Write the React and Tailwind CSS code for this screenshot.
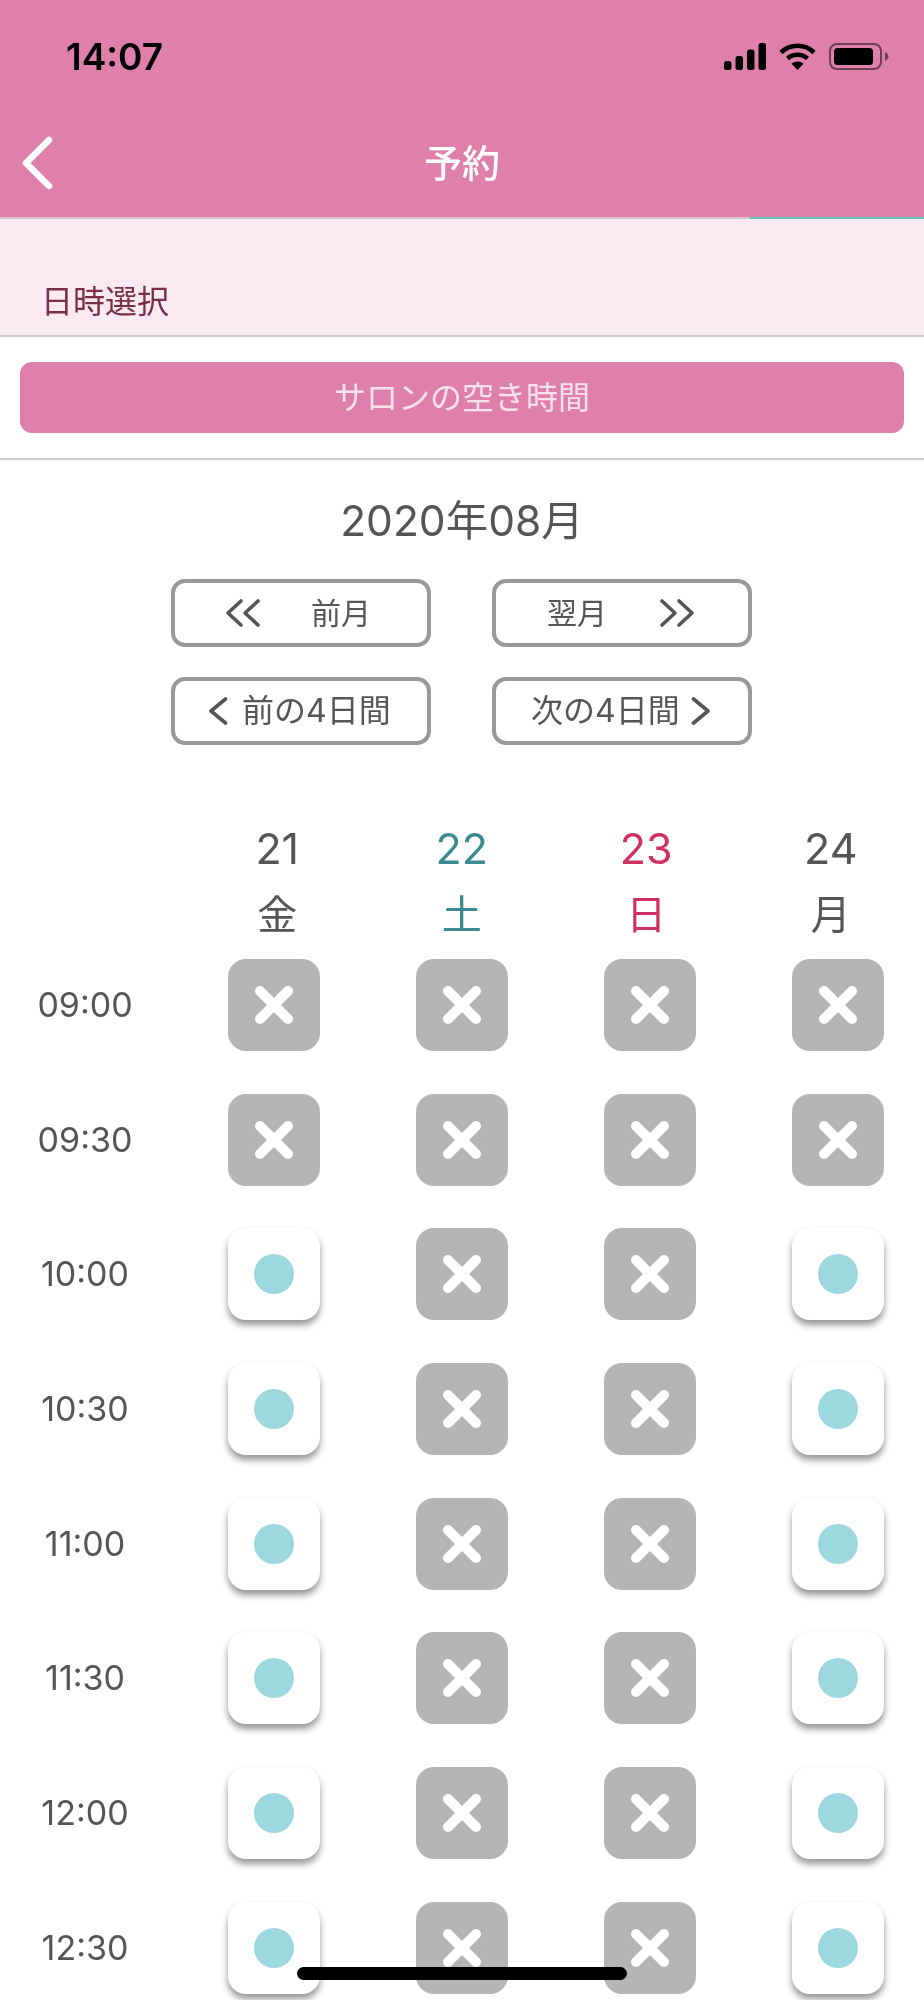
const FONT = "font-['Inter','Noto_Sans_CJK_JP',sans-serif]";

const rows = [
  ["09:00", 0, 0, 0, 0],
  ["09:30", 0, 0, 0, 0],
  ["10:00", 1, 0, 0, 1],
  ["10:30", 1, 0, 0, 1],
  ["11:00", 1, 0, 0, 1],
  ["11:30", 1, 0, 0, 1],
  ["12:00", 1, 0, 0, 1],
  ["12:30", 1, 0, 0, 1],
];

const days = [
  { d: "21", w: "金", c: "text-[#555555]" },
  { d: "22", w: "土", c: "text-[#3b8a8f]" },
  { d: "23", w: "日", c: "text-[#d0305f]" },
  { d: "24", w: "月", c: "text-[#555555]" },
];

function Chev({ dir = "left", double = false, className = "" }) {
  const w = double ? 36 : 20;
  return (
    <svg width={w} height="30" viewBox={`0 0 ${w} 30`} fill="none" stroke="#555555" strokeWidth="3.6" strokeLinecap="round" strokeLinejoin="round" className={`shrink-0 ${className}`}>
      {dir === "left" ? (
        double ? (
          <>
            <path d="M16 3 L3 15 L16 27" />
            <path d="M33 3 L20 15 L33 27" />
          </>
        ) : (
          <path d="M17.5 3 L3 15 L17.5 27" />
        )
      ) : double ? (
        <>
          <path d="M3 3 L16 15 L3 27" />
          <path d="M20 3 L33 15 L20 27" />
        </>
      ) : (
        <path d="M2.5 3 L17 15 L2.5 27" />
      )}
    </svg>
  );
}

function NavBtn({ children, className = "" }) {
  return (
    <div className={`w-[260px] h-[68px] border-[4px] border-[#999999] rounded-[14px] flex items-center text-[30px] text-[#555555] leading-none whitespace-nowrap ${className}`}>
      {children}
    </div>
  );
}

function Cell({ open }) {
  if (open) {
    return (
      <div className="w-[92px] h-[92px] rounded-[18px] bg-white flex items-center justify-center shadow-[0_5px_7px_rgba(0,0,0,0.42)]">
        <div className="w-[40px] h-[40px] rounded-full bg-[#9dd8df]" />
      </div>
    );
  }
  return (
    <div className="w-[92px] h-[92px] rounded-[18px] bg-[#b5b5b5] flex items-center justify-center">
      <svg width="38" height="38" viewBox="0 0 38 38" stroke="#ffffff" strokeWidth="10" strokeLinecap="round">
        <path d="M5 5 L33 33 M33 5 L5 33" />
      </svg>
    </div>
  );
}

export default function App() {
  return (
    <div className={`relative h-[2000px] w-[924px] overflow-hidden bg-white blur-[0.5px] ${FONT}`}>
      <header className="bg-[#df80ab] h-[217px] flex flex-col">
        <div className="h-[112px] flex items-center justify-between pl-[66px] pr-[35px]">
          <span className="text-[37px] font-semibold text-black leading-none">14:07</span>
          <div className="flex items-center gap-[13px]">
            <svg width="42" height="27" viewBox="0 0 42 27" fill="#000000">
              <rect x="0" y="18" width="7.5" height="9" rx="2.5" />
              <rect x="11.5" y="13" width="7.5" height="14" rx="2.5" />
              <rect x="23" y="6.5" width="7.5" height="20.5" rx="2.5" />
              <rect x="34.5" y="0" width="7.5" height="27" rx="2.5" />
            </svg>
            <svg width="37" height="27" viewBox="0 0 37 27" fill="none" stroke="#000000" strokeWidth="4.6">
              <path d="M2 9.5 C11 0.5 26 0.5 35 9.5" />
              <path d="M8.5 15.5 C14 10.5 23 10.5 28.5 15.5" />
              <path d="M18.5 27 L12.5 20.8 C16 17.8 21 17.8 24.5 20.8 Z" fill="#000000" stroke="none" />
            </svg>
            <svg width="60" height="27" viewBox="0 0 60 27" fill="none">
              <rect x="1" y="1" width="51" height="25" rx="7" stroke="#000000" strokeOpacity="0.5" strokeWidth="2" />
              <rect x="5" y="5" width="39" height="17" rx="3.5" fill="#000000" />
              <path d="M56 9 C58.5 10 59.5 12 59.5 13.5 C59.5 15 58.5 17 56 18 Z" fill="#000000" fillOpacity="0.5" />
            </svg>
          </div>
        </div>
        <div className="relative h-[102px] flex items-center justify-center">
          <svg className="absolute left-[20px] top-[24px]" width="34" height="54" viewBox="0 0 34 54" fill="none" stroke="#ffffff" strokeWidth="6.5" strokeLinecap="round" strokeLinejoin="round">
            <path d="M29 4 L6 27 L29 50" />
          </svg>
          <span className="text-[38px] font-medium text-white leading-none">予約</span>
        </div>
      </header>
      <div className="flex justify-end h-[2px] bg-[#d9c4cf]">
        <div className="w-[174px] bg-[#5fc4b8]" />
      </div>

      <div className="h-[118px] bg-[#f8eaf0] border-b-2 border-[#cccccc] flex items-end pl-[41px] pb-[17px]">
        <span className="text-[32px] text-[#7a2e45] leading-none">日時選択</span>
      </div>

      <div className="px-[20px] pt-[25px] pb-[25px] border-b-2 border-[#cccccc]">
        <div className="h-[71px] rounded-[12px] bg-[#df7fab] flex items-center justify-center text-[32px] text-[#f8e3ec] leading-none">
          サロンの空き時間
        </div>
      </div>

      <div className="mt-[36px] text-center text-[42.5px] text-[#555555] leading-[50px]">2020年08月</div>

      <div className="mt-[33px] pl-[171px] grid grid-cols-[260px_260px] gap-x-[61px] gap-y-[30px] w-fit">
        <NavBtn className="pl-[50px]">
          <Chev dir="left" double />
          <span className="ml-[50px]">前月</span>
        </NavBtn>
        <NavBtn className="pl-[51px]">
          <span>翌月</span>
          <Chev dir="right" double className="ml-[52px]" />
        </NavBtn>
        <NavBtn className="pl-[33px]">
          <Chev dir="left" />
          <span className="ml-[14px] text-[32px]">前の4日間</span>
        </NavBtn>
        <NavBtn className="pl-[35px]">
          <span className="text-[32px]">次の4日間</span>
          <Chev dir="right" className="ml-[11px]" />
        </NavBtn>
      </div>

      <div className="mt-[78px] pl-[185px] grid grid-cols-[184.5px_184.5px_184.5px_184.5px]">
        {days.map((x) => (
          <div key={x.d} className={`flex flex-col items-center ${x.c}`}>
            <span className="text-[43px] leading-[50px]">{x.d}</span>
            <span className="text-[40px] leading-[50px] mt-[17px]">{x.w}</span>
          </div>
        ))}
      </div>

      <div className="mt-[19px] flex flex-col gap-[42.7px]">
        {rows.map(([t, ...cells]) => (
          <div key={t} className="flex items-center">
            <span className="w-[170px] text-center text-[34px] text-[#555555] leading-none">{t}</span>
            <div className="ml-[58px] flex gap-[96px]">
              {cells.map((o, i) => (
                <Cell key={i} open={!!o} />
              ))}
            </div>
          </div>
        ))}
      </div>

      <div className="absolute left-[297px] top-[1967px] w-[330px] h-[13px] rounded-full bg-black" />
    </div>
  );
}
